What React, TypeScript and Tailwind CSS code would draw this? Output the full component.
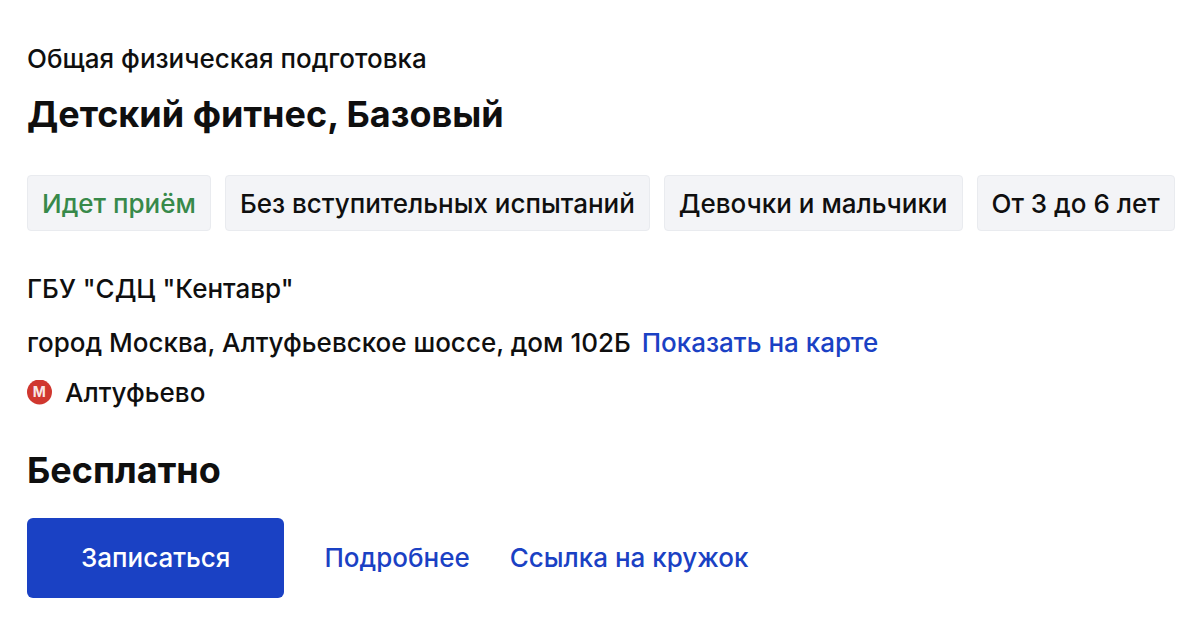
import clsx from "clsx";

type Tag = {
    title: string;
    accent?: boolean;
};

const MetroIcon = () => (
    <svg
        viewBox="0 0 26 26"
        className="size-[26px] shrink-0"
        aria-hidden="true"
    >
        <circle cx="12.5" cy="12" r="12.5" fill="#d0372f" />
        <text
            x="12.3"
            y="17"
            textAnchor="middle"
            fill="#fff"
            fillOpacity="0.9"
            className="font-['Inter',sans-serif] text-[14px] font-bold"
        >
            М
        </text>
    </svg>
);

const App = () => {
    return (
        <main className="min-h-screen bg-white pt-[39px] pr-[22px] pb-9 pl-[27px] font-['Inter',sans-serif] text-[26px] leading-10 font-medium text-[#0f0f0f]">
            <p>Общая физическая подготовка</p>
            <h1 className="mt-[11px] text-4xl leading-[48px] font-bold">
                Детский фитнес, Базовый
            </h1>

            <ul className="mt-[37px] flex flex-wrap gap-[14px]">
                {tags.map((tag) => (
                    <li
                        key={tag.title}
                        className={clsx(
                            "rounded-sm border border-[#e9ebef] bg-[#f3f4f7] px-[14px] pt-2 pb-[6px] whitespace-nowrap",
                            tag.accent && "text-[#37894a]"
                        )}
                    >
                        {tag.title}
                    </li>
                ))}
            </ul>

            <p className="mt-[38px]">ГБУ "СДЦ "Кентавр"</p>
            <p className="mt-[14px]">
                город Москва, Алтуфьевское шоссе, дом 102Б{" "}
                <a href="#map" className="ml-1 text-[#1a41c4]">
                    Показать на карте
                </a>
            </p>
            <p className="mt-[10px] flex items-center gap-3">
                <MetroIcon />
                Алтуфьево
            </p>

            <h2 className="mt-[33px] text-4xl leading-[48px] font-bold">
                Бесплатно
            </h2>
            <div className="mt-6 flex flex-wrap items-center gap-10 text-[#1a41c4]">
                <button
                    type="button"
                    className="h-20 rounded-md bg-[#1a41c4] px-[54px] text-white"
                >
                    Записаться
                </button>
                <a href="#details">Подробнее</a>
                <a href="#club">Ссылка на кружок</a>
            </div>
        </main>
    );
};
export default App;

const tags: Array<Tag> = [
    {
        title: "Идет приём",
        accent: true,
    },
    {
        title: "Без вступительных испытаний",
    },
    {
        title: "Девочки и мальчики",
    },
    {
        title: "От 3 до 6 лет",
    },
];
